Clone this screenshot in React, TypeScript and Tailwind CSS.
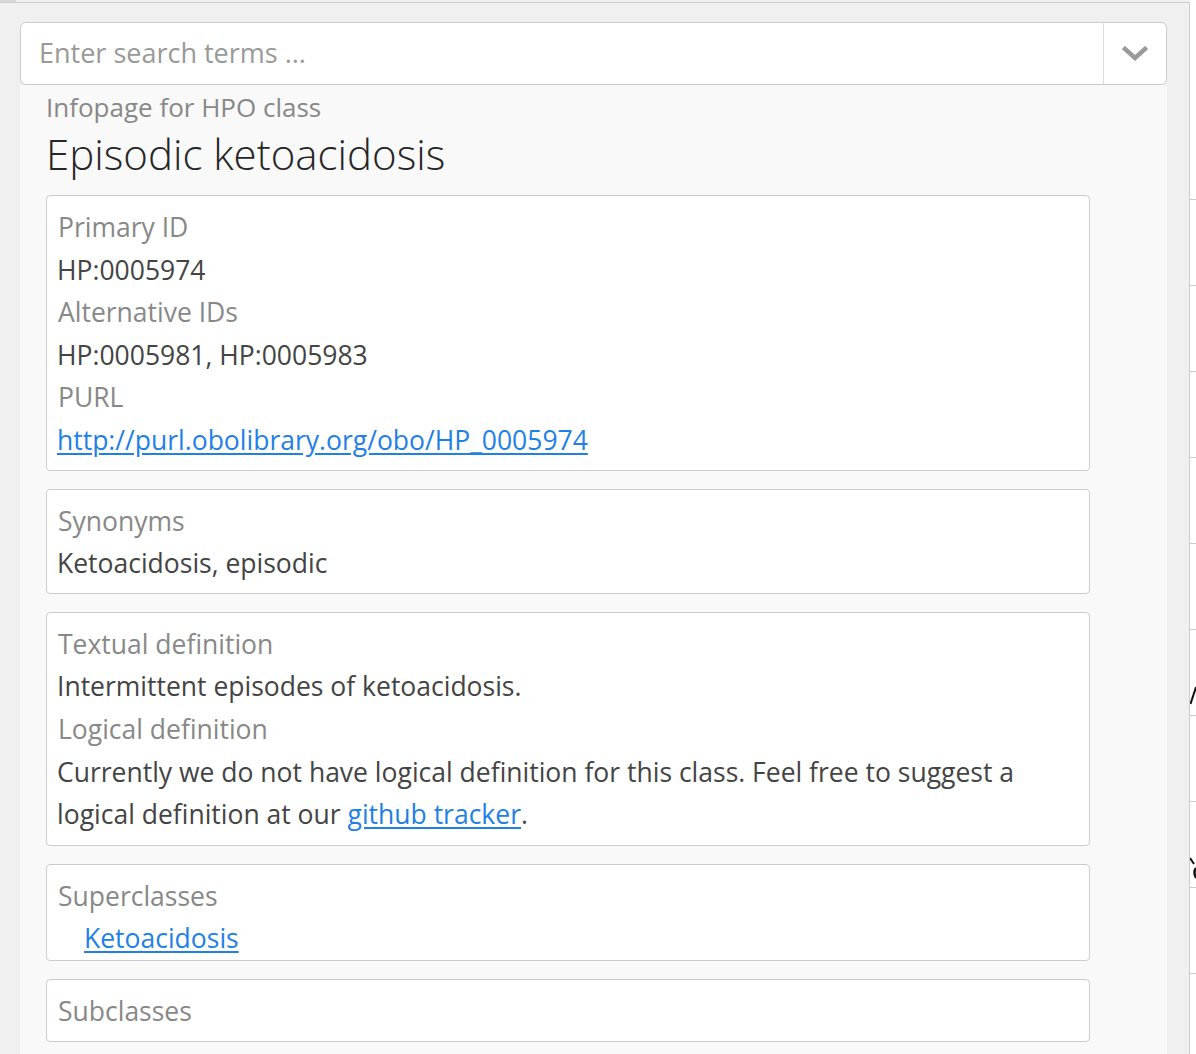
import React from 'react';

const font = { fontFamily: '"Open Sans", "Noto Sans", sans-serif' };

function Card({ children, className = '' }: { children: React.ReactNode; className?: string }) {
  return (
    <div className={`bg-white border border-[#cccccc] rounded-[4px] pl-[10px] pr-[10px] pt-[10px] ${className}`}>
      {children}
    </div>
  );
}

function Label({ children }: { children: React.ReactNode }) {
  return <div className="text-[#888888] pl-px">{children}</div>;
}

function Value({ children }: { children: React.ReactNode }) {
  return <div className="text-[#444444]">{children}</div>;
}

export default function App() {
  const ticks = [0, 1, 2, 3, 4, 5, 6, 7, 8, 9, 10];

  return (
    <div className="w-[1196px] h-[1054px] overflow-hidden flex bg-white" style={font}>
      {/* main panel */}
      <div className="w-[1190px] shrink-0 flex flex-col">
        <div className="flex h-[2px]">
          <div className="w-[16px] bg-[#d9d9d9]" />
          <div className="flex-1 bg-[#f0f0f0]" />
        </div>
        <div className="flex-1 bg-[#f0f0f0] border-t border-r border-[#cccccc] pl-[20px] pr-[22px] pt-[19px]">
          {/* search */}
          <div className="flex h-[63px] bg-white border border-[#cccccc] rounded-[6px]">
            <div className="flex-1 flex items-center pl-[18px] text-[27px] text-[#999999]">
              Enter search terms ...
            </div>
            <div className="w-[63px] border-l border-[#dddddd] flex items-center justify-center">
              <svg width="26" height="16" viewBox="0 0 26 16">
                <polyline points="3,3 13,12 23,3" fill="none" stroke="#9a9a9a" strokeWidth="4.5" strokeLinecap="square" />
              </svg>
            </div>
          </div>

          {/* content */}
          <div className="bg-[#f9f9f9] h-full pl-[26px] pr-[77px] text-[26.5px] leading-[42.6px]">
            <div className="text-[#888888] text-[26px] leading-[43px] pt-[1px]">Infopage for HPO class</div>
            <h1 className="text-[42px] leading-[49px] font-light text-[#262626] mb-[17px]">Episodic ketoacidosis</h1>

            <div className="flex flex-col gap-[18px]">
              <Card className="pb-[8px]">
                <Label>Primary ID</Label>
                <Value>HP:0005974</Value>
                <Label>Alternative IDs</Label>
                <Value>HP:0005981, HP:0005983</Value>
                <Label>PURL</Label>
                <div>
                  <a className="text-[#1f80e6] underline underline-offset-[3px]" href="#">
                    http://purl.obolibrary.org/obo/HP_0005974
                  </a>
                </div>
              </Card>

              <Card className="pb-[8px]">
                <Label>Synonyms</Label>
                <Value>Ketoacidosis, episodic</Value>
              </Card>

              <Card className="pb-[9px]">
                <Label>Textual definition</Label>
                <Value>Intermittent episodes of ketoacidosis.</Value>
                <Label>Logical definition</Label>
                <Value>
                  Currently we do not have logical definition for this class. Feel free to suggest a logical definition at
                  our{' '}
                  <a className="text-[#1f80e6] underline underline-offset-[3px]" href="#">
                    github tracker
                  </a>
                  <span>.</span>
                </Value>
              </Card>

              <Card className="pb-0">
                <Label>Superclasses</Label>
                <div className="pl-[27px]">
                  <a className="text-[#1f80e6] underline underline-offset-[3px]" href="#">
                    Ketoacidosis
                  </a>
                </div>
              </Card>

              <Card className="pb-[8px]">
                <Label>Subclasses</Label>
              </Card>
            </div>
          </div>
        </div>
      </div>

      {/* neighbouring panel, cut off */}
      <div className="flex-1 relative pt-[199px]">
        {ticks.map((t) => (
          <div key={t} className="h-[86px] border-t border-[#cccccc]" />
        ))}
        <svg className="absolute left-0 top-[686px]" width="6" height="20" viewBox="0 0 6 20">
          <line x1="6" y1="1" x2="0.5" y2="18" stroke="#111" strokeWidth="2" />
        </svg>
        <svg className="absolute left-0 top-[856px]" width="6" height="28" viewBox="0 0 6 28">
          <line x1="0" y1="2" x2="4" y2="8" stroke="#111" strokeWidth="2" />
          <path d="M6 12 Q3 16 6 22" fill="none" stroke="#111" strokeWidth="2.5" />
        </svg>
      </div>
    </div>
  );
}
